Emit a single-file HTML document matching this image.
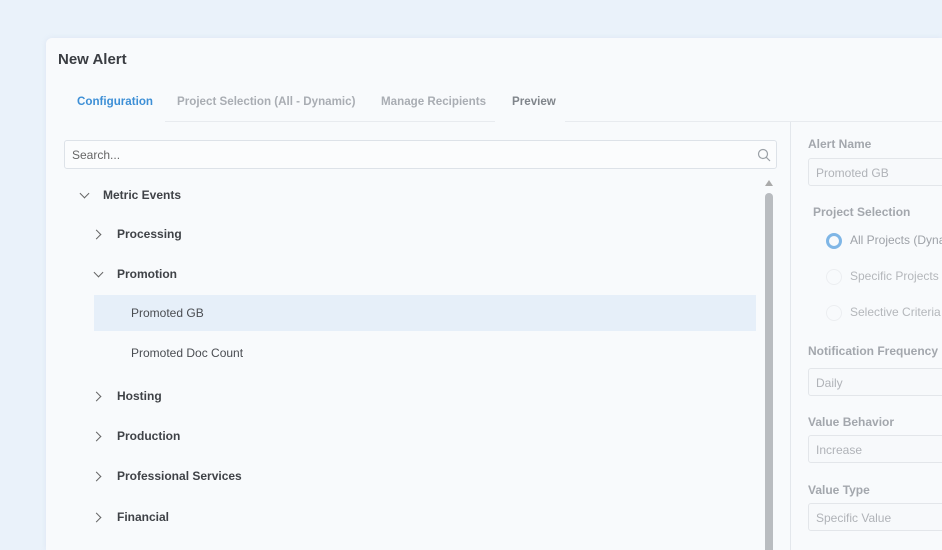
<!DOCTYPE html>
<html style="width:942px;height:550px;overflow:hidden"><head><style>
*{box-sizing:border-box;margin:0;padding:0}
body{width:942px;height:550px;overflow:hidden;background:#eaf2fa;font-family:"Liberation Sans",Arial,sans-serif;position:relative}
.card{position:absolute;left:46px;top:38px;width:896px;height:512px;background:#f8fafc;border-radius:6px 0 0 0;box-shadow:0 0 6px rgba(150,170,200,.15)}
.t{position:absolute;white-space:nowrap}
.title{left:58px;top:51px;font-size:15px;font-weight:bold;color:#3a3d42}
.tab{top:95px;font-size:11.6px;font-weight:bold;color:#a9adb3}
.search{position:absolute;left:64px;top:140px;width:713px;height:29px;border:1px solid #dde2e8;border-radius:3px;background:#fbfcfd}
.node{font-size:12px;font-weight:bold;color:#3f4247}
.leaf{font-size:12px;color:#4a4d52}
.sel{position:absolute;left:94px;top:295px;width:662px;height:36px;background:#e6eff9}
.chev{position:absolute;width:7px;height:7px;border-right:1.5px solid #666;border-bottom:1.5px solid #666}
.r{transform:rotate(-45deg)}
.d{transform:rotate(45deg)}
.scroll{position:absolute;left:765px;top:193px;width:8px;height:370px;background:#b9bcc0;border-radius:4px}
.panel{position:absolute;left:790px;top:122px;width:1px;height:430px;background:#e3e7ec}
.lbl{font-size:12px;font-weight:bold;color:#a3a7ad}
.inp{position:absolute;left:808px;width:140px;height:28px;border:1px solid #e3e6ea;border-radius:3px;background:#f7f9fb;font-size:12px;color:#b0b3b8;padding:7px 7px}
.rad{position:absolute;left:826px;width:16px;height:16px;border-radius:50%;border:1px solid #eceef1}
.rl{font-size:12px;color:#b4b7bb}
</style></head><body>
<div class="card"></div>
<div class="t title">New Alert</div>
<div class="t tab" style="left:77px;color:#3d8fd6">Configuration</div>
<div class="t tab" style="left:177px">Project Selection (All - Dynamic)</div>
<div class="t tab" style="left:381px">Manage Recipients</div>
<div class="t tab" style="left:512px;color:#80858b">Preview</div>
<div style="position:absolute;left:165px;top:121px;width:330px;height:1px;background:#e8ebef"></div>
<div style="position:absolute;left:565px;top:121px;width:380px;height:1px;background:#e8ebef"></div>
<div class="search"><span class="t" style="left:7px;top:7px;font-size:12px;color:#666">Search...</span>
<svg style="position:absolute;right:5px;top:7px" width="14" height="14" viewBox="0 0 14 14"><circle cx="6" cy="6" r="4.5" fill="none" stroke="#9aa0a6" stroke-width="1.2"/><path d="M9.3 9.3L13 13" stroke="#9aa0a6" stroke-width="1.2"/></svg></div>
<div class="sel"></div>
<div class="chev d" style="left:81px;top:190px"></div><div class="t node" style="left:103px;top:188px">Metric Events</div>
<div class="chev r" style="left:93px;top:231px"></div><div class="t node" style="left:117px;top:227px">Processing</div>
<div class="chev d" style="left:95px;top:269px"></div><div class="t node" style="left:117px;top:267px">Promotion</div>
<div class="t leaf" style="left:131px;top:306px">Promoted GB</div>
<div class="t leaf" style="left:131px;top:346px">Promoted Doc Count</div>
<div class="chev r" style="left:93px;top:393px"></div><div class="t node" style="left:117px;top:389px">Hosting</div>
<div class="chev r" style="left:93px;top:433px"></div><div class="t node" style="left:117px;top:429px">Production</div>
<div class="chev r" style="left:93px;top:473px"></div><div class="t node" style="left:117px;top:469px">Professional Services</div>
<div class="chev r" style="left:93px;top:514px"></div><div class="t node" style="left:117px;top:510px">Financial</div>
<div style="position:absolute;left:765px;top:180px;width:0;height:0;border-left:4px solid transparent;border-right:4px solid transparent;border-bottom:6px solid #aaa"></div>
<div class="scroll"></div>
<div class="panel"></div>
<div class="t lbl" style="left:808px;top:137px">Alert Name</div>
<div class="inp" style="top:158px">Promoted GB</div>
<div class="t lbl" style="left:813px;top:205px">Project Selection</div>
<div class="rad" style="top:233px;border:3px solid #7fb6e6"></div><div class="t rl" style="left:850px;top:233px;color:#9ea2a8">All Projects (Dynamic)</div>
<div class="rad" style="top:269px"></div><div class="t rl" style="left:850px;top:269px">Specific Projects</div>
<div class="rad" style="top:305px"></div><div class="t rl" style="left:850px;top:305px">Selective Criteria</div>
<div class="t lbl" style="left:808px;top:344px">Notification Frequency</div>
<div class="inp" style="top:368px">Daily</div>
<div class="t lbl" style="left:808px;top:415px">Value Behavior</div>
<div class="inp" style="top:435px">Increase</div>
<div class="t lbl" style="left:808px;top:483px">Value Type</div>
<div class="inp" style="top:503px">Specific Value</div>
</body></html>
